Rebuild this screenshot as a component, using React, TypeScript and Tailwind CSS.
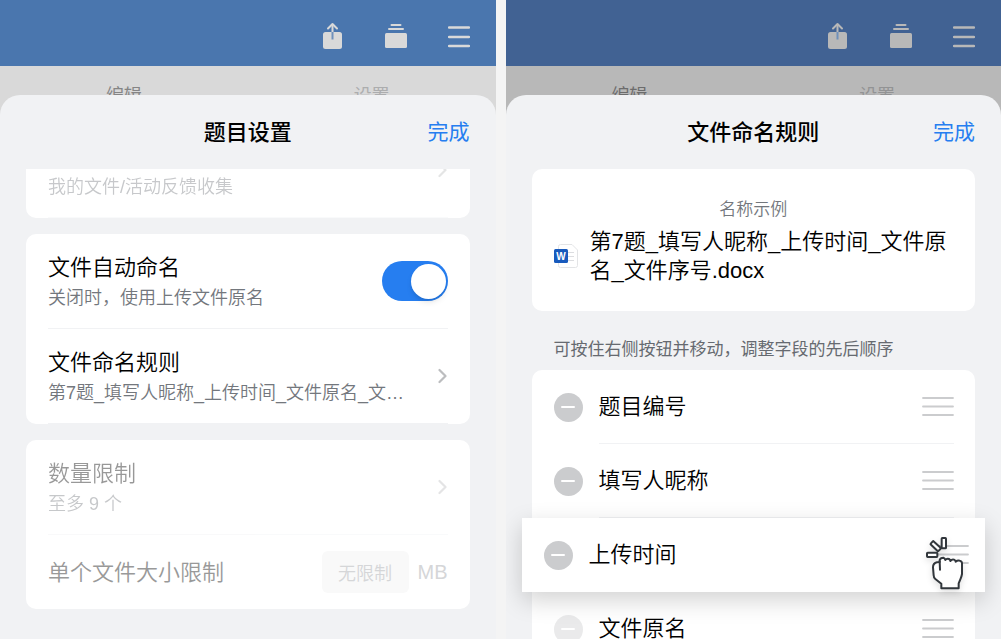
import { ReactNode, useState } from "react";
import clsx from "clsx";

const fields = [
  { id: "number", label: "题目编号" },
  { id: "nickname", label: "填写人昵称" },
  { id: "time", label: "上传时间", dragging: true },
  { id: "origin", label: "文件原名", faded: true },
];

const ShareIcon = () => (
  <svg width="22" height="28" viewBox="0 0 22 28" fill="none">
    <rect x="1" y="10" width="19" height="17" rx="2.5" fill="currentColor" />
    <path d="M10.5 10V2.5" stroke="currentColor" strokeWidth="2" />
    <path
      d="M6 6.5L10.5 2L15 6.5"
      stroke="currentColor"
      strokeWidth="2"
      strokeLinecap="round"
      strokeLinejoin="round"
    />
    <path d="M10.5 10V17.5" className="stroke-[#6f90bb]" strokeWidth="2" />
  </svg>
);

const StackIcon = () => (
  <svg width="22" height="28" viewBox="0 0 22 28" fill="none">
    <rect y="11" width="22" height="15" rx="1.5" fill="currentColor" />
    <path
      d="M4 7H18M6.5 3H15.5"
      stroke="currentColor"
      strokeWidth="2"
      strokeLinecap="round"
    />
  </svg>
);

const MenuIcon = () => (
  <svg width="22" height="28" viewBox="0 0 22 28" fill="none">
    <path
      d="M1 5.5H21M1 15H21M1 24H21"
      stroke="currentColor"
      strokeWidth="2.5"
      strokeLinecap="round"
    />
  </svg>
);

const Chevron = () => (
  <svg width="10" height="16" viewBox="0 0 10 16" fill="none" className="shrink-0">
    <path
      d="M1.5 2L7.5 8L1.5 14"
      stroke="#bcbdbf"
      strokeWidth="2.2"
      strokeLinecap="round"
      strokeLinejoin="round"
    />
  </svg>
);

const WordIcon = () => (
  <svg width="24" height="24" viewBox="0 0 24 24" fill="none" className="shrink-0">
    <path
      d="M6.5 0.5H18L23.5 6V21.5A2 2 0 0 1 21.5 23.5H6.5A2 2 0 0 1 4.5 21.5V2.5A2 2 0 0 1 6.5 0.5Z"
      fill="white"
      stroke="#e3e4e6"
    />
    <path d="M14 8.5H20M14 12.5H20M14 16.5H20" stroke="#dcdde0" />
    <rect y="5" width="14" height="14" rx="1.5" fill="#185abd" />
    <text
      x="7"
      y="15.5"
      textAnchor="middle"
      fill="white"
      fontSize="10"
      fontWeight="700"
      fontFamily="Liberation Sans, sans-serif"
    >
      W
    </text>
  </svg>
);

const DragHandle = () => (
  <svg width="32" height="20" viewBox="0 0 32 20" fill="none">
    <path
      d="M1 1H31M1 9.5H31M1 18H31"
      stroke="#cbccce"
      strokeWidth="1.8"
      strokeLinecap="round"
    />
  </svg>
);

const GrabCursor = () => (
  <svg
    width="39"
    height="54"
    viewBox="132 108 117 162"
    fill="white"
    stroke="#32373c"
    strokeWidth="6"
    strokeLinejoin="round"
    strokeLinecap="round"
    className="pointer-events-none absolute top-[18px] right-[21px] drop-shadow-md"
  >
    <rect x="182" y="114" width="13" height="31" rx="2" />
    <rect x="148" y="132" width="32" height="13" rx="2" transform="rotate(43 164 138.5)" />
    <rect x="138" y="158" width="31" height="13" rx="2" />
    <path d="M176 186V180Q178 173 187 173Q192 175 193 180Q197 175 204 177Q208 179 208 183Q213 177 219 179Q224 181 224 185Q230 180 236 182Q243 183 243 190V222Q242 229 238 238L233 250V265H181V251L163 237Q158 233 158 226L156 202Q156 190 168 187L176 186Z" />
    <path d="M176 184L177 209" fill="none" />
  </svg>
);

type ScreenProps = {
  title: string;
  dark?: boolean;
  children: ReactNode;
};

const Screen = ({ title, dark, children }: ScreenProps) => (
  <section className="flex min-w-0 flex-1 flex-col overflow-hidden bg-[#f1f2f4]">
    <header
      className={clsx(
        "flex h-[66px] shrink-0 items-center justify-end gap-[41px] px-[26px] pt-[6px]",
        dark ? "bg-[#416293] text-[#b8b8b8]" : "bg-[#4a76ae] text-[#d9d9d9]"
      )}
    >
      <button aria-label="分享">
        <ShareIcon />
      </button>
      <button aria-label="文档列表">
        <StackIcon />
      </button>
      <button aria-label="菜单">
        <MenuIcon />
      </button>
    </header>
    <nav
      className={clsx(
        "flex h-14 shrink-0 items-center pt-1 text-[18px]",
        dark ? "bg-[#b8b8b8] text-[#6c6c6c]" : "bg-[#d9d9d9] text-[#858585]"
      )}
    >
      <button className="flex-1 font-normal">编辑</button>
      <button
        className={clsx("flex-1 font-normal", dark ? "text-[#929394]" : "text-[#acadae]")}
      >
        设置
      </button>
    </nav>
    <div className="relative -mt-[27px] flex flex-1 flex-col rounded-t-[20px] bg-[#f1f2f4] px-[26px]">
      <div className="grid h-[74px] shrink-0 grid-cols-[1fr_auto_1fr] items-center">
        <h2 className="col-start-2 text-[22px] font-medium text-black">{title}</h2>
        <button className="justify-self-end text-[21px] font-normal text-[#267ef0]">
          完成
        </button>
      </div>
      {children}
    </div>
  </section>
);

type SettingRowProps = {
  title?: string;
  desc?: string;
  disabled?: boolean;
  children?: ReactNode;
};

const SettingRow = ({ title, desc, disabled, children }: SettingRowProps) => (
  <div
    className={clsx(
      "mx-[22px] flex h-[95px] shrink-0 items-center justify-between border-b border-[#f1f2f4]",
      disabled && "opacity-40"
    )}
  >
    <div className="w-[361px] min-w-0 shrink pt-[3px]">
      <div className="h-[30px] text-[22px] leading-[30px] text-black">{title}</div>
      <div className="truncate text-[18px] leading-[30px] text-[#73777d]">{desc}</div>
    </div>
    {children}
  </div>
);

const TitleSettings = () => {
  const [autoName, setAutoName] = useState(true);

  return (
    <Screen title="题目设置">
      <div className="flex h-[49px] shrink-0 flex-col justify-end overflow-hidden rounded-b-[10px] bg-white">
        <SettingRow desc="我的文件/活动反馈收集" disabled>
          <Chevron />
        </SettingRow>
      </div>
      <div className="mt-4 rounded-[10px] bg-white">
        <SettingRow title="文件自动命名" desc="关闭时，使用上传文件原名">
          <label className="relative flex shrink-0 items-center">
            <input
              type="checkbox"
              role="switch"
              aria-label="文件自动命名"
              checked={autoName}
              onChange={(e) => setAutoName(e.target.checked)}
              className="peer h-10 w-[66px] appearance-none rounded-full bg-gray-200 checked:bg-[#267ef0]"
            />
            <span className="absolute left-[3px] size-[35px] rounded-full bg-white shadow-md peer-checked:left-[29px]" />
          </label>
        </SettingRow>
        <SettingRow title="文件命名规则" desc="第7题_填写人昵称_上传时间_文件原名_文件序号.docx">
          <Chevron />
        </SettingRow>
      </div>
      <div className="mt-4 rounded-[10px] bg-white">
        <SettingRow title="数量限制" desc="至多 9 个" disabled>
          <Chevron />
        </SettingRow>
        <div className="mx-[22px] flex h-[74px] items-center">
          <label htmlFor="size-limit" className="flex-1 text-[22px] text-[#999999]">
            单个文件大小限制
          </label>
          <input
            id="size-limit"
            value="无限制"
            disabled
            className="h-[42px] w-[87px] rounded-md bg-[#f9f9f9] text-center text-[18px] text-[#d5d6d8]"
          />
          <span className="ml-[9px] text-[20px] text-[#d5d6d8]">MB</span>
        </div>
      </div>
    </Screen>
  );
};

const NamingRules = () => (
  <Screen title="文件命名规则" dark>
    <div className="rounded-[10px] bg-white px-[22px] pt-7 pb-[26px]">
      <div className="text-center text-[17px] leading-[26px] text-[#73777d]">名称示例</div>
      <div className="mt-1 flex items-center gap-3">
        <WordIcon />
        <p className="flex-1 text-[22px] leading-[29px] text-black">
          第7题_填写人昵称_上传时间_文件原名_文件序号.docx
        </p>
      </div>
    </div>
    <p className="px-[22px] pt-[26px] pb-[7px] text-[17px] leading-[26px] font-normal text-[#666a70]">
      可按住右侧按钮并移动，调整字段的先后顺序
    </p>
    <ul className="rounded-t-[10px] bg-white">
      {fields.map((field) => (
        <li
          key={field.id}
          className={clsx(
            "flex h-[74px] items-center gap-4 pl-[22px]",
            field.dragging
              ? "relative z-10 -mx-[10px] bg-white pr-4 shadow-[0_8px_24px_rgba(0,0,0,0.18)]"
              : "pr-[21px]"
          )}
        >
          <button
            aria-label={`移除${field.label}`}
            className={clsx(
              "flex size-[29px] shrink-0 items-center justify-center rounded-full bg-[#cbccce]",
              field.faded && "opacity-40"
            )}
          >
            <span className="h-[2px] w-[14px] rounded-full bg-white" />
          </button>
          <div
            className={clsx(
              "flex h-full flex-1 items-center justify-between border-b text-[22px] text-black",
              field.dragging ? "border-transparent" : "border-[#f1f2f4]"
            )}
          >
            {field.label}
            <button aria-label={`拖动${field.label}`}>
              <DragHandle />
            </button>
          </div>
          {field.dragging && <GrabCursor />}
        </li>
      ))}
    </ul>
  </Screen>
);

const App = () => {
  return (
    <main className="flex h-screen gap-[10px] overflow-hidden bg-[#f4f4f4] font-[350] font-['Liberation_Sans','Noto_Sans_CJK_SC',sans-serif]">
      <TitleSettings />
      <NamingRules />
    </main>
  );
};

export default App;
